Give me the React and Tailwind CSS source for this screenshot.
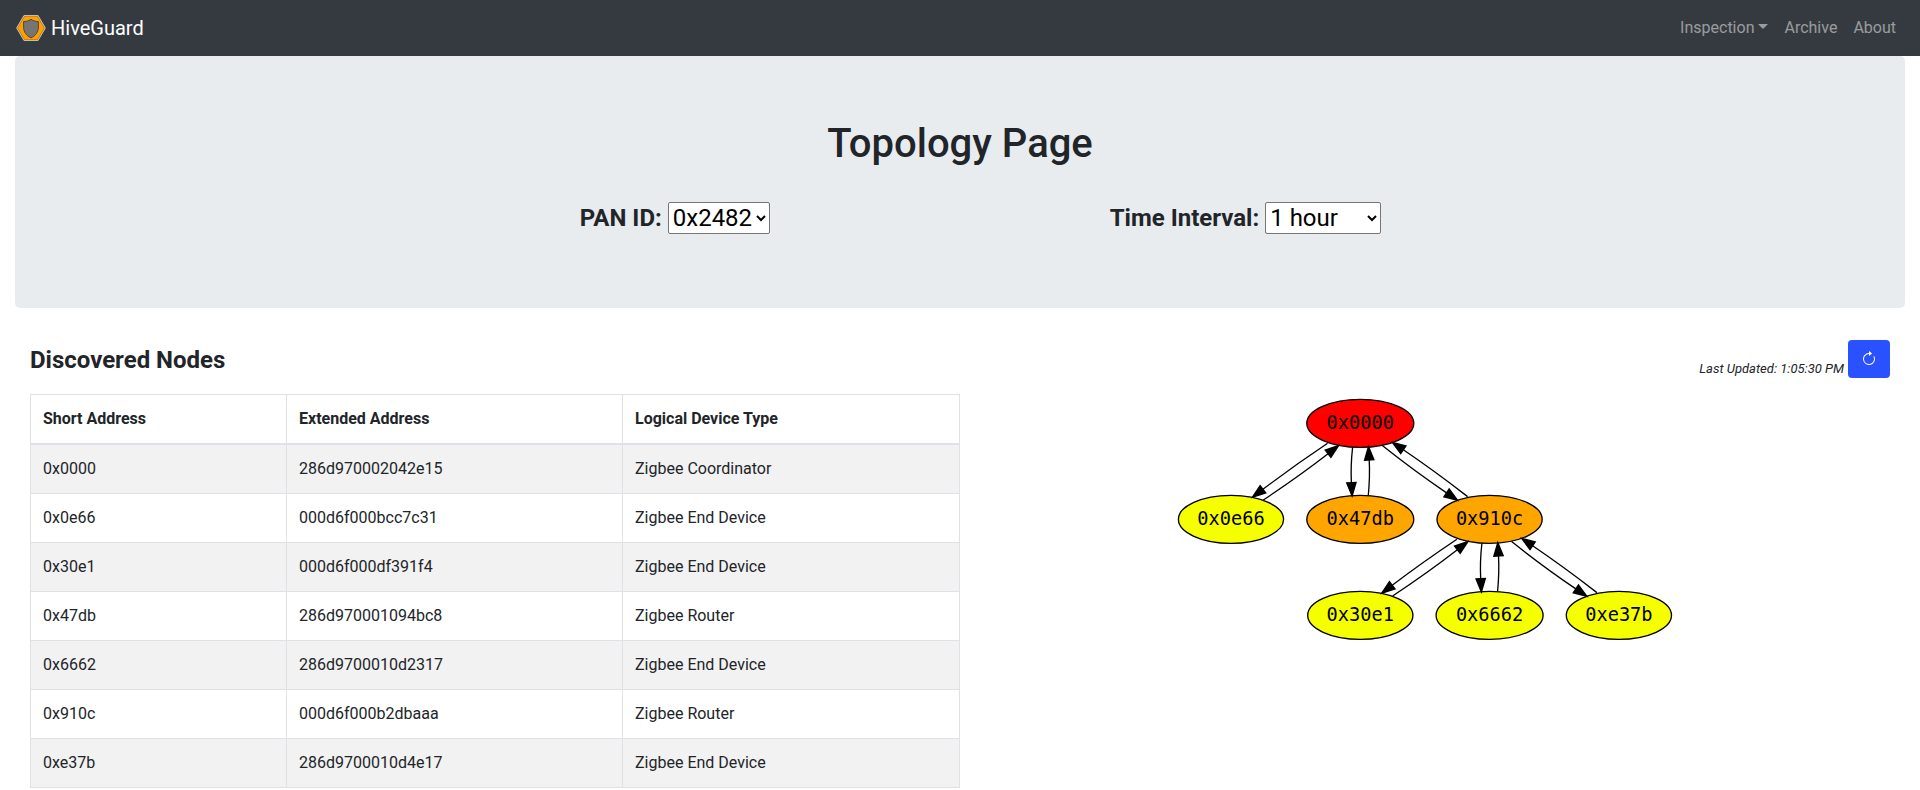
const rows = [
  ["0x0000", "286d970002042e15", "Zigbee Coordinator"],
  ["0x0e66", "000d6f000bcc7c31", "Zigbee End Device"],
  ["0x30e1", "000d6f000df391f4", "Zigbee End Device"],
  ["0x47db", "286d970001094bc8", "Zigbee Router"],
  ["0x6662", "286d9700010d2317", "Zigbee End Device"],
  ["0x910c", "000d6f000b2dbaaa", "Zigbee Router"],
  ["0xe37b", "286d9700010d4e17", "Zigbee End Device"],
];

// Node centres, in pixels of the drawing.
const nodes = [
  { id: "0x0000", x: 182.3, y: 25.3, rx: 53.5, fill: "#ff0000" },
  { id: "0x0e66", x: 53, y: 121.3, rx: 52.6, fill: "#f6ff00" },
  { id: "0x47db", x: 182.3, y: 121.3, rx: 53.5, fill: "#ffa500" },
  { id: "0x910c", x: 311.6, y: 121.3, rx: 52.6, fill: "#ffa500" },
  { id: "0x30e1", x: 182.3, y: 217.3, rx: 52.6, fill: "#f6ff00" },
  { id: "0x6662", x: 311.6, y: 217.3, rx: 53.5, fill: "#f6ff00" },
  { id: "0xe37b", x: 440.9, y: 217.3, rx: 52.6, fill: "#f6ff00" },
];

// Edges between a parent and its three children, relative to the parent: start, control, tip.
const fan = [
  [[-32.7, 20], [-67, 43], [-108, 74]],
  [[-97, 76.7], [-62, 53.5], [-21.7, 22.3]],
  [[-7.7, 24], [-9.8, 43], [-8.2, 72.7]],
  [[8, 72], [9.8, 53], [8.2, 23.3]],
  [[22, 22.3], [55, 48.5], [97.3, 77]],
  [[107.3, 73.3], [74, 47.5], [32, 19]],
];

function Edge({ points: [s, c, t] }) {
  const len = Math.hypot(t[0] - c[0], t[1] - c[1]);
  const ux = (t[0] - c[0]) / len;
  const uy = (t[1] - c[1]) / len;
  const bx = t[0] - ux * 13.33;
  const by = t[1] - uy * 13.33;
  const head = `${t[0]},${t[1]} ${bx - uy * 4.67},${by + ux * 4.67} ${bx + uy * 4.67},${by - ux * 4.67}`;
  return (
    <g stroke="#000" strokeWidth="1.333">
      <path d={`M${s[0]},${s[1]} Q${c[0]},${c[1]} ${bx},${by}`} fill="none" />
      <polygon points={head} fill="#000" />
    </g>
  );
}

function Graph() {
  return (
    <svg width="496" height="244" viewBox="0 0 496 244" className="block overflow-visible">
      {nodes.map((n) => (
        <g key={n.id}>
          <ellipse cx={n.x} cy={n.y} rx={n.rx} ry="24" fill={n.fill} stroke="#000" strokeWidth="1.333" />
          <text x={n.x} y={n.y + 5.8} textAnchor="middle" fontSize="18.667" className="font-['DejaVu_Sans_Mono',monospace]">
            {n.id}
          </text>
        </g>
      ))}
      {[nodes[0], nodes[3]].map((p) => (
        <g key={p.id} transform={`translate(${p.x} ${p.y})`}>
          {fan.map((points, i) => (
            <Edge key={i} points={points} />
          ))}
        </g>
      ))}
    </svg>
  );
}

function Logo() {
  return (
    <svg width="30" height="30" viewBox="0 0 30 30">
      <path d="M8 2.500H22L29.300 15L22 27.500H8L.7 15Z" fill="#ff9f00" stroke="#c4c8cc" strokeWidth="1" />
      <path d="M8.500 3.300H21.500L28.300 15L21.500 26.700H8.500L1.700 15Z" fill="none" stroke="#8a6420" strokeWidth=".5" />
      <path d="M15 6.300C17 7.800 19.600 8.500 22.400 8.600V14C22.400 19 19.500 22.800 15 24.900C10.500 22.800 7.600 19 7.600 14V8.600C10.400 8.500 13 7.800 15 6.300Z" fill="#757575" stroke="#54492f" strokeWidth="1" />
    </svg>
  );
}

const selectClass = "h-8 rounded-[2px] border border-[#767676] bg-white text-2xl leading-7 font-normal text-black";

export default function App() {
  return (
    <div className="h-[790px] overflow-hidden bg-white font-[Roboto,sans-serif] text-base leading-6 text-[#212529]">
      <nav className="flex h-14 items-center justify-between bg-[#343a40] px-4">
        <a className="flex items-center gap-[5px] text-xl leading-[30px] text-white">
          <Logo />
          HiveGuard
        </a>
        <ul className="flex text-white/50">
          <li className="flex items-center px-2">
            Inspection
            <span className="mb-1 ml-[4px] border-x-[5px] border-t-[5px] border-x-transparent border-t-current" />
          </li>
          <li className="px-2">Archive</li>
          <li className="px-2">About</li>
        </ul>
      </nav>

      <div className="px-[15px]">
        <header className="mb-8 h-[252px] rounded-[5px] bg-[#e8ecef] pt-16 text-center">
          <h1 className="text-[40px] leading-[48px] font-medium">Topology Page</h1>
          <div className="mt-[34px] flex justify-center gap-[340px] text-2xl font-bold">
            <label className="flex items-center gap-1.5">
              PAN ID:
              <select className={selectClass}>
                <option>0x2482</option>
              </select>
            </label>
            <label className="mr-[-41px] flex items-center gap-1.5">
              Time Interval:
              <select className={`${selectClass} w-[116px]`}>
                <option>1 hour</option>
              </select>
            </label>
          </div>
        </header>

        <main className="px-[15px]">
          <div className="flex h-[38px] items-center justify-between">
            <h2 className="pt-0.5 text-2xl font-bold">Discovered Nodes</h2>
            <div className="flex h-full items-center gap-1">
              <em className="mt-5 text-[13px] leading-5">Last Updated: 1:05:30 PM</em>
              <button className="flex h-[38px] w-[42px] items-center justify-center rounded bg-[#2a51ff] text-white">
                <svg width="16" height="16" viewBox="0 0 16 16" fill="currentColor">
                  <path fillRule="evenodd" d="M8 3a5 5 0 1 0 4.546 2.914.5.5 0 0 1 .908-.417A6 6 0 1 1 8 2v1z" />
                  <path d="M8 4.466V.534a.25.25 0 0 1 .41-.192l2.360 1.966c.120.100.120.284 0 .384L8.410 4.658A.25.25 0 0 1 8 4.466z" />
                </svg>
              </button>
            </div>
          </div>

          <div className="mt-4 flex">
            <table className="w-[930px] table-fixed border-collapse text-left">
              <colgroup>
                <col className="w-[256px]" />
                <col className="w-[336px]" />
                <col />
              </colgroup>
              <thead>
                <tr>
                  {["Short Address", "Extended Address", "Logical Device Type"].map((h) => (
                    <th key={h} className="border border-b-2 border-[#dee2e6] p-3 font-bold">{h}</th>
                  ))}
                </tr>
              </thead>
              <tbody>
                {rows.map((r) => (
                  <tr key={r[0]} className="odd:bg-[#f2f2f2]">
                    {r.map((c) => (
                      <td key={c} className="border border-[#dee2e6] p-3">{c}</td>
                    ))}
                  </tr>
                ))}
              </tbody>
            </table>
            <div className="flex flex-1 justify-center pt-1 pl-0.5">
              <Graph />
            </div>
          </div>
        </main>
      </div>
    </div>
  );
}
